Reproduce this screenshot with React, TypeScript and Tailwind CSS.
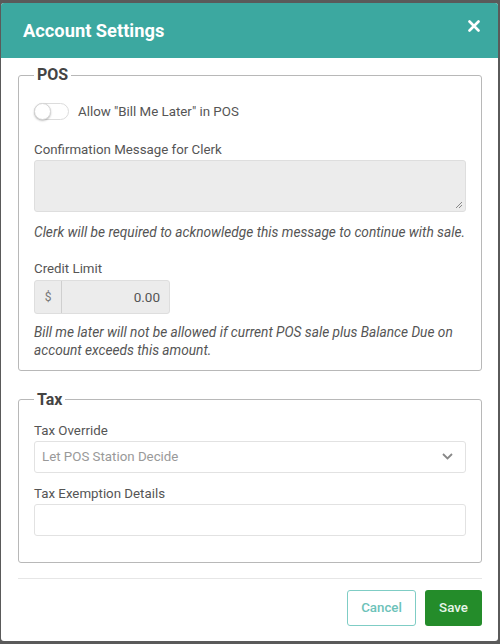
export default function App() {
  return (
    <div
      className="h-[644px] w-[500px] overflow-hidden bg-[#5a5a5a] pl-[1px] pr-[2px] pt-[3px]"
      style={{ fontFamily: "Roboto, 'Liberation Sans', sans-serif" }}
    >
      <div className="h-[638px] overflow-hidden rounded-[3px] bg-white">
        <header className="flex h-[55px] items-center justify-between bg-[#3ca8a0] pl-[22px] pr-[18px]">
          <h1 className="text-[18.3px] font-bold text-white">Account Settings</h1>
          <svg className="mb-[10px]" width="12" height="12" viewBox="0 0 12 12">
            <path d="M1.5 1.5 L10.5 10.5 M10.5 1.5 L1.5 10.5" stroke="white" strokeWidth="2.6" strokeLinecap="round" />
          </svg>
        </header>

        <div className="pl-[17px] pr-[16px] pt-[5px]">
          <fieldset className="rounded-[3px] border border-[#b8b8b8] px-[15px] pb-[11px]">
            <legend className="px-[3px] text-[16px] font-bold text-[#444]">POS</legend>

            <div className="mt-[15px] flex items-center gap-[9px]">
              <div className="relative h-[17px] w-[35px] rounded-full border border-[#dcdcdc] bg-white">
                <div className="absolute left-[-1px] top-[-1px] h-[17px] w-[17px] rounded-full border border-[#d5d5d5] bg-white shadow-[0_1px_2px_rgba(0,0,0,0.25)]" />
              </div>
              <span className="text-[13.3px] text-[#555]">Allow "Bill Me Later" in POS</span>
            </div>

            <label className="mt-[18px] block text-[13.3px] text-[#555]">Confirmation Message for Clerk</label>
            <div className="relative mt-0 h-[52px] rounded-[3px] border border-[#dedede] bg-[#ececec]">
              <svg className="absolute bottom-[2px] right-[2px]" width="9" height="9" viewBox="0 0 9 9">
                <path d="M8 2 L2 8 M8 5 L5 8" stroke="#888" strokeWidth="1" />
              </svg>
            </div>
            <p className="mt-[11px] text-[13.7px] italic leading-[18px] text-[#555]">
              Clerk will be required to acknowledge this message to continue with sale.
            </p>

            <label className="mt-[18px] block text-[13.3px] text-[#555]">Credit Limit</label>
            <div className="mt-[1px] flex h-[34px] w-[136px] rounded-[3px] border border-[#dedede] bg-[#ececec]">
              <div className="flex w-[27px] items-center justify-center border-r border-[#cfcfcf] text-[12px] text-[#777]">$</div>
              <div className="flex flex-1 items-center justify-end pr-[9px] text-[13.5px] text-[#555]">0.00</div>
            </div>
            <p className="mt-[9px] text-[13.7px] italic leading-[18px] text-[#555]">
              Bill me later will not be allowed if current POS sale plus Balance Due on account exceeds this amount.
            </p>
          </fieldset>

          <fieldset className="mt-[17px] rounded-[3px] border border-[#b8b8b8] px-[15px] pb-[26px]">
            <legend className="px-[3px] text-[16px] font-bold text-[#444]">Tax</legend>

            <label className="mt-[9px] block text-[13.3px] text-[#555]">Tax Override</label>
            <div className="mt-0 flex h-[32px] items-center justify-between rounded-[3px] border border-[#e2e2e2] bg-white pl-[7px] pr-[12px]">
              <span className="text-[13.3px] text-[#999]">Let POS Station Decide</span>
              <svg width="11" height="7" viewBox="0 0 11 7">
                <path d="M1 1 L5.5 5.5 L10 1" fill="none" stroke="#888" strokeWidth="1.8" />
              </svg>
            </div>

            <label className="mt-[11px] block text-[13.3px] text-[#555]">Tax Exemption Details</label>
            <div className="mt-0 h-[32px] rounded-[3px] border border-[#e2e2e2] bg-white" />
          </fieldset>

          <div className="mt-[15px] border-t border-[#e6e6e6]" />

          <div className="mt-[11px] flex justify-end gap-[9px]">
            <button className="h-[36px] w-[69px] rounded-[3px] border border-[#7fcdc5] bg-white text-[13.3px] font-medium text-[#6cc2b9]">
              Cancel
            </button>
            <button className="h-[36px] w-[57px] rounded-[3px] bg-[#248c2a] text-[13.3px] font-medium text-[#e8f5e8]">
              Save
            </button>
          </div>
        </div>
      </div>
    </div>
  );
}
